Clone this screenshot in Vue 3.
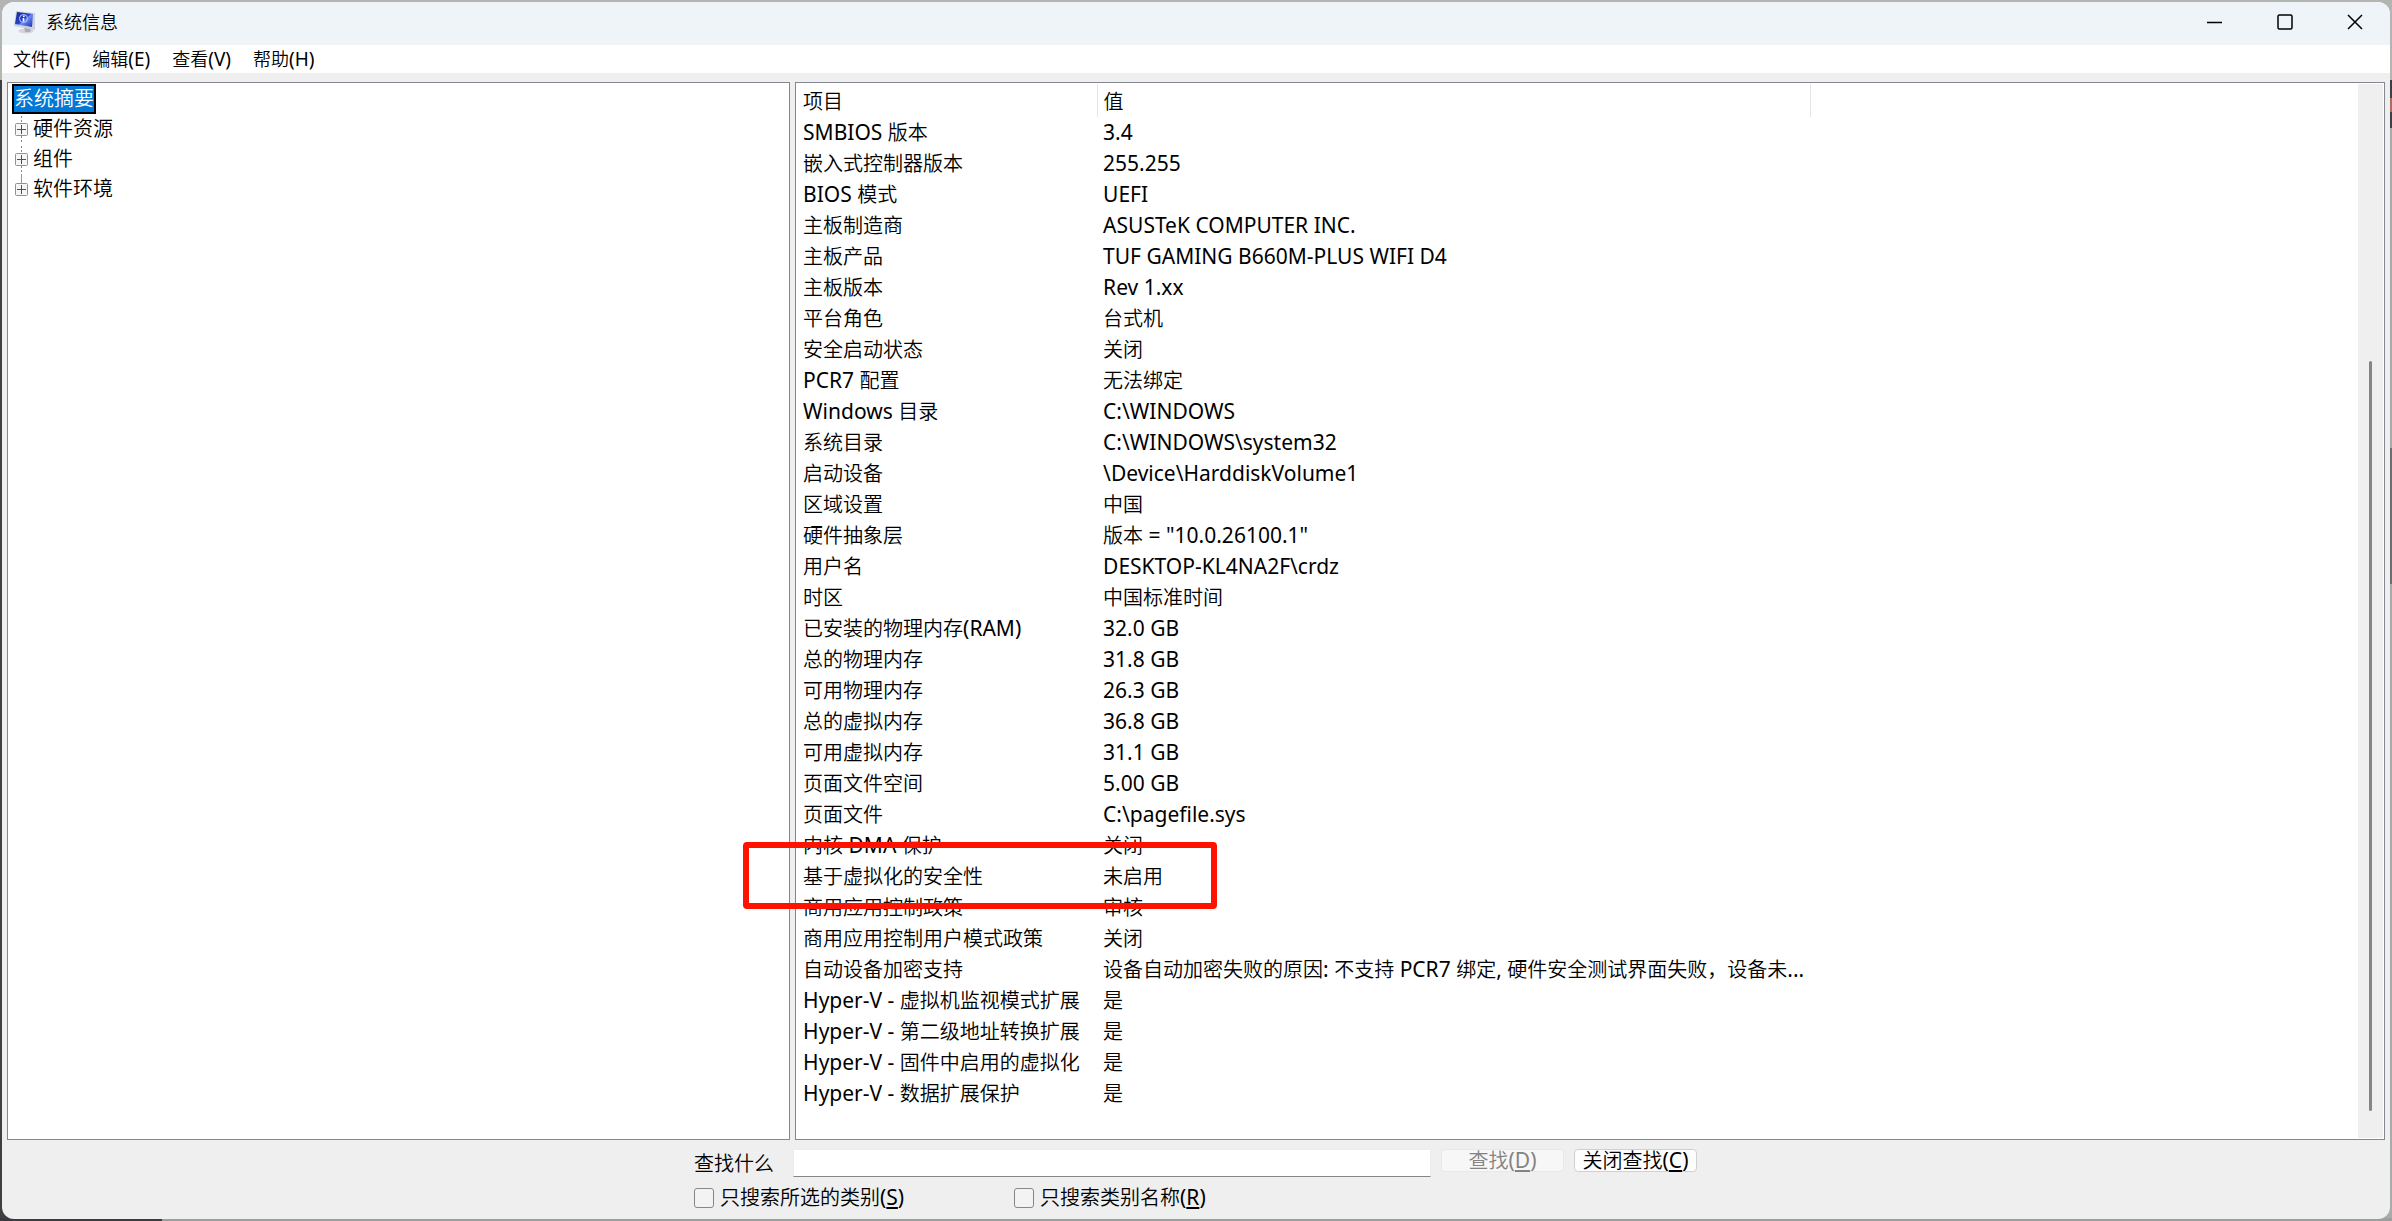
<script setup>
import { ref } from 'vue'

const menus = ['文件(F)', '编辑(E)', '查看(V)', '帮助(H)']
const tree = ['硬件资源', '组件', '软件环境']
const query = ref('')
const onlySelected = ref(false)
const onlyNames = ref(false)

const rows = [
  ['SMBIOS 版本', '3.4'],
  ['嵌入式控制器版本', '255.255'],
  ['BIOS 模式', 'UEFI'],
  ['主板制造商', 'ASUSTeK COMPUTER INC.'],
  ['主板产品', 'TUF GAMING B660M-PLUS WIFI D4'],
  ['主板版本', 'Rev 1.xx'],
  ['平台角色', '台式机'],
  ['安全启动状态', '关闭'],
  ['PCR7 配置', '无法绑定'],
  ['Windows 目录', 'C:\\WINDOWS'],
  ['系统目录', 'C:\\WINDOWS\\system32'],
  ['启动设备', '\\Device\\HarddiskVolume1'],
  ['区域设置', '中国'],
  ['硬件抽象层', '版本 = "10.0.26100.1"'],
  ['用户名', 'DESKTOP-KL4NA2F\\crdz'],
  ['时区', '中国标准时间'],
  ['已安装的物理内存(RAM)', '32.0 GB'],
  ['总的物理内存', '31.8 GB'],
  ['可用物理内存', '26.3 GB'],
  ['总的虚拟内存', '36.8 GB'],
  ['可用虚拟内存', '31.1 GB'],
  ['页面文件空间', '5.00 GB'],
  ['页面文件', 'C:\\pagefile.sys'],
  ['内核 DMA 保护', '关闭'],
  ['基于虚拟化的安全性', '未启用'],
  ['商用应用控制政策', '审核'],
  ['商用应用控制用户模式政策', '关闭'],
  ['自动设备加密支持', '设备自动加密失败的原因: 不支持 PCR7 绑定, 硬件安全测试界面失败，设备未...'],
  ['Hyper-V - 虚拟机监视模式扩展', '是'],
  ['Hyper-V - 第二级地址转换扩展', '是'],
  ['Hyper-V - 固件中启用的虚拟化', '是'],
  ['Hyper-V - 数据扩展保护', '是'],
]

// Splits a string into Latin and Chinese runs, so each script gets its own size.
const runs = (text) =>
  text.match(/[\x20-\x7e]+|[^\x20-\x7e]+/g).map((t) => ({ t, latin: t.charCodeAt(0) < 127 }))
</script>

<template>
  <div class="desktop">
    <main class="window">
      <header class="titlebar">
        <svg class="logo" viewBox="0 0 22 24" aria-hidden="true">
          <defs>
            <linearGradient id="screen" x1="0" y1="0" x2="1" y2="1">
              <stop offset="0" stop-color="#16268f" />
              <stop offset="0.5" stop-color="#2a46cf" />
              <stop offset="0.55" stop-color="#6f8cf0" />
              <stop offset="1" stop-color="#1a2fb8" />
            </linearGradient>
          </defs>
          <ellipse cx="12" cy="21" rx="7.500" ry="2.600" fill="#d3d5d8" />
          <path d="M10 17l7 2-1 3h-5z" fill="#a9adb3" />
          <path d="M2 1l19 2v17L0 16z" fill="#cdd2dc" />
          <path d="M3 2l16 2-1 13L1 14z" fill="url(#screen)" />
          <circle cx="9.500" cy="8.500" r="4" fill="none" stroke="#b9c9f8" stroke-width="1" />
          <path d="M9.800 5.500v1.500M9.500 8v3.500" stroke="#fff" stroke-width="1.600" />
        </svg>
        <h1>系统信息</h1>
        <div class="controls">
          <button type="button" aria-label="最小化">
            <svg viewBox="0 0 16 16"><path d="M0 8.500h15" /></svg>
          </button>
          <button type="button" aria-label="最大化">
            <svg viewBox="0 0 16 16"><rect x="1" y="1" width="14" height="14" rx="1.500" /></svg>
          </button>
          <button type="button" aria-label="关闭">
            <svg viewBox="0 0 16 16"><path d="M1 1l14 14M15 1L1 15" /></svg>
          </button>
        </div>
      </header>

      <nav class="menubar">
        <button v-for="m in menus" :key="m" type="button">
          <span v-for="(r, i) in runs(m)" :key="i" :class="{ latin: r.latin }">{{ r.t }}</span>
        </button>
      </nav>

      <div class="panes">
        <aside class="tree">
          <button type="button" class="root">系统摘要</button>
          <ul>
            <li v-for="t in tree" :key="t">
              <button type="button" class="node">
                <svg viewBox="0 0 13 13" aria-hidden="true">
                  <rect x="0.500" y="0.500" width="12" height="12" rx="1" fill="#f6f6f6" stroke="#919191" />
                  <path d="M2 6.500h9M6.500 2v9" stroke="#3b4f8f" />
                </svg>
                <span>{{ t }}</span>
              </button>
            </li>
          </ul>
        </aside>

        <section class="list">
          <table>
            <colgroup><col class="c-item" /><col class="c-value" /><col /></colgroup>
            <thead>
              <tr><th scope="col">项目</th><th scope="col">值</th><td></td></tr>
            </thead>
            <tbody>
              <tr v-for="(row, i) in rows" :key="i" :class="{ marked: i === 24 }">
                <td v-for="(cell, c) in row" :key="c">
                  <span v-for="(r, k) in runs(cell)" :key="k" :class="{ latin: r.latin }">{{ r.t }}</span>
                  <i v-if="i === 24 && c === 0" class="marker"></i>
                </td>
                <td></td>
              </tr>
            </tbody>
          </table>
          <div class="track"><div class="thumb"></div></div>
        </section>
      </div>

      <form class="find" @submit.prevent>
        <div class="line">
          <label class="caption" for="query">查找什么</label>
          <input id="query" v-model="query" class="query" type="text" />
          <button type="submit" class="push" disabled>查找<span class="latin">(<u>D</u>)</span></button>
          <button type="button" class="push">关闭查找<span class="latin">(<u>C</u>)</span></button>
        </div>
        <div class="checks">
          <label><input v-model="onlySelected" type="checkbox" /><span>只搜索所选的类别<span class="latin">(<u>S</u>)</span></span></label>
          <label><input v-model="onlyNames" type="checkbox" /><span>只搜索类别名称<span class="latin">(<u>R</u>)</span></span></label>
        </div>
      </form>
    </main>
  </div>
</template>

<style>
body {
  margin: 0;
}
</style>

<style scoped>
* {
  box-sizing: border-box;
}
.desktop {
  min-height: 100vh;
  padding: 2px;
  display: flex;
  background:
    linear-gradient(90deg, #3a3a3e 162px, #9c9e9d 162px) bottom / 100% 3px no-repeat,
    linear-gradient(#b4b4b2 80px, #3e3f43 80px) left / 20px 100% no-repeat,
    linear-gradient(#b4b4b2 80px, #3e3f43 80px 98px, #b06a5e 98px 112px, #3e3f43 112px 128px, #a9aaaa 128px 448px, #6c6d6e 448px 584px, #a9aaaa 584px) right / 20px 100% no-repeat,
    #b4b4b2;
  font-family: "Noto Sans", "Noto Sans CJK SC", sans-serif;
  font-size: 20px;
  font-weight: 350;
  color: #000;
}
.latin {
  font-size: 21px;
  font-weight: 400;
  white-space: pre;
}
button {
  font: inherit;
  color: inherit;
  border: 0;
  padding: 0;
  background: none;
}
.window {
  flex: 1;
  min-width: 0;
  display: flex;
  flex-direction: column;
  background: #efefef;
  border-radius: 12px;
  overflow: hidden;
}
.titlebar {
  height: 43px;
  display: flex;
  align-items: center;
  background: #eff4f9;
  padding: 0 0 3px 12px;
}
.logo {
  width: 22px;
  height: 24px;
}
h1 {
  margin: 0 0 0 10px;
  font-size: 18px;
  line-height: 24px;
  font-weight: inherit;
}
.controls {
  margin-left: auto;
  display: flex;
}
.controls button {
  width: 70px;
  height: 40px;
  display: grid;
  place-items: center;
}
.controls svg {
  width: 16px;
  height: 16px;
  fill: none;
  stroke: #000;
  stroke-width: 1.5;
}
.menubar {
  height: 28px;
  display: flex;
  gap: 22px;
  padding-left: 11px;
  background: #fff;
  font-size: 18px;
  line-height: 28px;
}
.menubar .latin {
  font-size: 19px;
}
.panes {
  flex: 1;
  display: grid;
  grid-template-columns: 33fr 67fr;
  gap: 5px;
  padding: 9px 5px 0;
}
.tree {
  min-width: 0;
  background: #fff;
  border: 1px solid #828790;
  padding: 1px 4px;
}
.root {
  display: block;
  height: 30px;
  line-height: 26px;
  border: 2px solid #000;
  background: #0078d7;
  color: #fff;
}
.tree ul {
  list-style: none;
  margin: 0;
  padding: 0 0 0 3px;
}
.tree li {
  height: 30px;
  background: linear-gradient(#fff 50%, #888 50%) 6px 0 / 1px 4px repeat-y;
}
.tree li:last-child {
  background: linear-gradient(#999, #999) 6px 0 / 1px 10px no-repeat;
}
.node {
  display: flex;
  align-items: center;
  gap: 5px;
  height: 30px;
  line-height: 30px;
}
.node svg {
  width: 13px;
  height: 13px;
}
.list {
  min-width: 0;
  display: flex;
  background: #fff;
  border: 1px solid #828790;
  padding: 1px;
}
table {
  flex: 1;
  align-self: flex-start;
  table-layout: fixed;
  border-collapse: collapse;
  width: 100%;
}
.c-item {
  width: 300px;
}
.c-value {
  width: 713px;
}
tr {
  height: 31px;
}
th,
td {
  padding: 0 0 0 6px;
  text-align: left;
  font-weight: inherit;
  line-height: 30px;
  white-space: nowrap;
}
thead tr {
  height: 33px;
}
th {
  padding-top: 2px;
  border-right: 1px solid #e5e5e5;
}
.marked td:first-child {
  position: relative;
}
.marker {
  position: absolute;
  left: -54px;
  top: -19px;
  width: 474px;
  height: 67px;
  border: 6px solid #fe1300;
  border-radius: 4px;
}
.track {
  width: 25px;
  background: #efefef;
  display: flex;
  flex-direction: column;
  justify-content: flex-end;
  align-items: center;
  padding-bottom: 27px;
}
.thumb {
  width: 3px;
  height: 73%;
  background: #858585;
  border-radius: 2px;
}
.find {
  height: 79px;
  padding: 9px 0 0 692px;
}
.line {
  display: flex;
  align-items: flex-start;
}
.caption {
  width: 99px;
  line-height: 30px;
}
.query {
  width: 638px;
  height: 28px;
  border: 1px solid #ececec;
  border-bottom-color: #868686;
  background: #fff;
  padding: 0 6px;
  font: inherit;
}
.push {
  width: 123px;
  height: 23px;
  line-height: 20px;
  margin-left: 10px;
  border: 1px solid #d0d0d0;
  border-radius: 4px;
  background: #fdfdfd;
  white-space: nowrap;
}
.push:disabled {
  background: #f7f7f7;
  border-color: #e8e8e8;
  color: #838383;
}
.checks {
  display: flex;
  margin-top: 3px;
}
.checks label {
  width: 320px;
  display: flex;
  align-items: center;
  gap: 6px;
  line-height: 30px;
}
.checks input {
  appearance: none;
  width: 20px;
  height: 20px;
  margin: 0;
  border: 1px solid #868686;
  border-radius: 3px;
  background: #f3f3f3;
}
u {
  text-underline-offset: 2px;
}
</style>
